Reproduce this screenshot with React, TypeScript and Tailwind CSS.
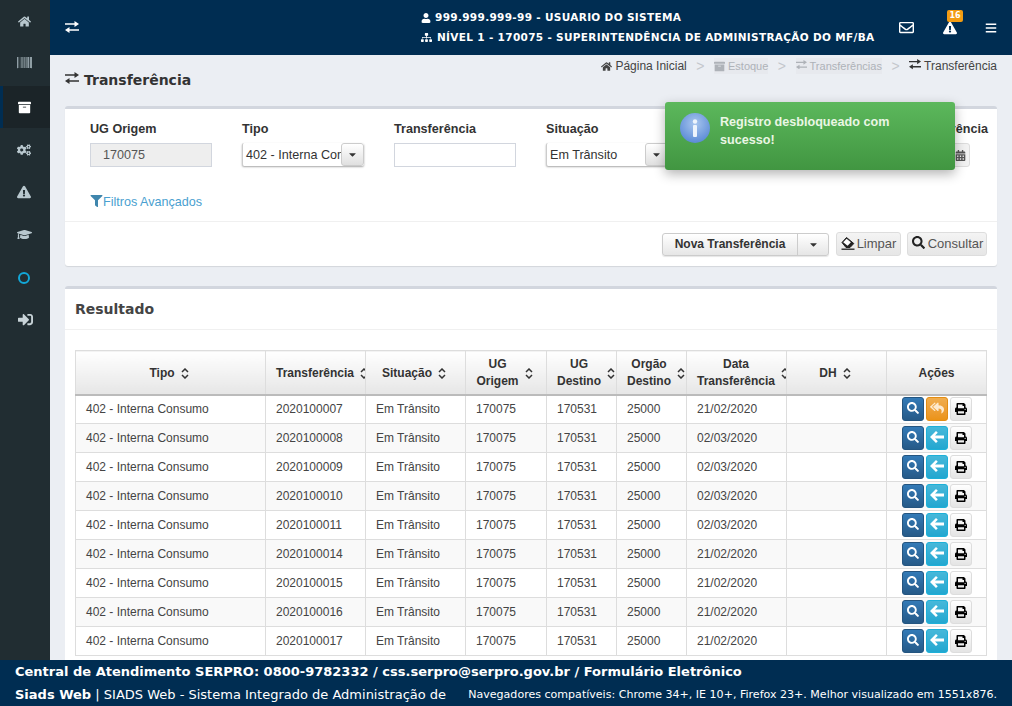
import React from "react";
import { FaHome, FaBarcode, FaArchive, FaCogs, FaExclamationTriangle, FaGraduationCap, FaSignInAlt, FaUser, FaSitemap, FaRegEnvelope, FaBars, FaFilter, FaSearch, FaPrint, FaReplyAll, FaCalendarAlt, FaCaretDown } from "react-icons/fa";

const rows: [string, string, boolean?][] = [
  ["2020100007", "21/02/2020", true],
  ["2020100008", "02/03/2020"],
  ["2020100009", "02/03/2020"],
  ["2020100010", "02/03/2020"],
  ["2020100011", "02/03/2020"],
  ["2020100014", "21/02/2020"],
  ["2020100015", "21/02/2020"],
  ["2020100016", "21/02/2020"],
  ["2020100017", "21/02/2020"],
];

function Exch({ className }: { className?: string }) {
  return (
    <svg viewBox="0 0 14 12" width="1em" height="0.86em" fill="currentColor" className={`shrink-0 ${className ?? ""}`}>
      <path d="M0 2.2h9.5V0L14 3 9.5 6V3.8H0zM14 8.2H4.5V6L0 9l4.5 3V9.8H14z" />
    </svg>
  );
}

function Eraser() {
  return (
    <svg viewBox="0 0 14 14" width="14" height="14" className="-mt-[3px] shrink-0" fill="none">
      <path d="M1 6.5 5.5 1.5 12.8 7.5 9 11.5H5z" fill="#222" stroke="#222" strokeWidth="1" strokeLinejoin="round" />
      <path d="M2.2 6.3 5.6 2.7 9.9 6.2 6.6 9.7z" fill="#fff" />
      <path d="M0.5 13.2h13" stroke="#222" strokeWidth="1.3" />
    </svg>
  );
}

function ArrowL() {
  return (
    <svg viewBox="0 0 14 12" width="14" height="12" fill="currentColor" className="-mt-[2px] shrink-0">
      <path d="M0 6 6 0l1.8 1.8L5 4.6h9v2.8H5l2.8 2.8L6 12z" />
    </svg>
  );
}

function Sort() {
  return (
    <svg width="8" height="11" viewBox="0 0 8 11" className="inline-block shrink-0" fill="none" stroke="#333" strokeWidth="1.5">
      <path d="M1 4 4 1l3 3M1 7l3 3 3-3" />
    </svg>
  );
}

function Th({ w, children, sort = true }: { w: string; children: React.ReactNode; sort?: boolean }) {
  return (
    <th className={`${w} h-[44px] overflow-hidden whitespace-nowrap border border-[#ddd] border-b-2 border-b-[#bbb] bg-gradient-to-b from-white to-[#e6e6e6] pb-0 pl-[10px] pt-[1px] text-center font-bold text-[#333] ${sort ? "pr-[13px]" : "pr-[10px]"}`}>
      <div className="inline-flex items-center gap-[6px] leading-[17px]">
        <span>{children}</span>
        {sort && <Sort />}
      </div>
    </th>
  );
}

function Td({ children }: { children?: React.ReactNode }) {
  return <td className="h-[29px] border border-[#ddd] p-0 pl-[10px] align-middle text-[#444]">{children}</td>;
}

function ActBtn({ cls, children }: { cls: string; children: React.ReactNode }) {
  return <span className={`flex h-[24px] w-[22px] items-center justify-center rounded-[3px] border ${cls}`}>{children}</span>;
}

function SelectBox({ text }: { text: string }) {
  return (
    <div className="mt-[1px] flex h-[23px] w-[122px] items-center overflow-hidden rounded-[2px] border-l border-l-[#ccc] bg-white shadow-[0_1px_2px_rgba(0,0,0,0.35)]">
      <span className="flex-1 overflow-hidden whitespace-nowrap pl-[3px] pt-[2px] text-[12.6px] text-[#333]">{text}</span>
      <span className="flex h-full w-[23px] shrink-0 items-center justify-center rounded-[3px] border border-[#ccc] bg-gradient-to-b from-white to-[#e0e0e0]">
        <FaCaretDown className="text-[11px] text-[#333]" />
      </span>
    </div>
  );
}

function Field({ label, labelCls = "", children }: { label: string; labelCls?: string; children: React.ReactNode }) {
  return (
    <div className="w-[152px] shrink-0">
      <div className={`mb-[5px] h-[17px] whitespace-nowrap text-[12.6px] font-bold leading-[17px] text-[#333] ${labelCls}`}>{label}</div>
      {children}
    </div>
  );
}

function Crumb({ icon, text, muted }: { icon: React.ReactNode; text: string; muted?: boolean }) {
  return (
    <span className={`flex items-center gap-[3px] ${muted ? "bg-[#e7e9ee] text-[11px] text-[#aeb2b8]" : "text-[#444]"}`}>
      {icon}
      {text}
    </span>
  );
}

const Sep = () => <span className="mx-[9.5px] text-[14px] leading-[14px] text-[#c4c7cc]">&gt;</span>;

const side = [
  { I: FaHome, cls: "h-[42px] text-[#b8c7ce]", ic: "text-[13px]" },
  { I: FaBarcode, cls: "h-[44px] pb-[3px] text-[#b8c7ce]", ic: "text-[15px]" },
  { I: FaArchive, cls: "h-[42px] border-l-[3px] border-l-[#002d52] bg-[#1b2428] text-white", ic: "-ml-[3px] text-[13px]" },
  { I: FaCogs, cls: "h-[43px] text-[#b8c7ce]", ic: "text-[14px]" },
  { I: FaExclamationTriangle, cls: "h-[42px] text-[#b8c7ce]", ic: "text-[14px]" },
  { I: FaGraduationCap, cls: "h-[42px] text-[#b8c7ce]", ic: "text-[15px]" },
];

export default function App() {
  return (
    <div className="flex h-[706px] w-[1012px] flex-col overflow-hidden font-['Liberation_Sans',sans-serif] text-[12px]">
      <div className="flex min-h-0 flex-1">
        <aside className="flex w-[50px] shrink-0 flex-col bg-[#212d32]">
          {side.map(({ I, cls, ic }, i) => (
            <div key={i} className={`flex items-center justify-center pr-[2px] ${cls}`}>
              <I className={ic} />
            </div>
          ))}
          <div className="flex h-[46px] items-center justify-center pr-[2px]">
            <span className="h-[12px] w-[12px] rounded-full border-2 border-[#12a7d8]" />
          </div>
          <div className="flex h-[37px] items-center justify-center text-[#c8d3d8]">
            <FaSignInAlt className="text-[15px]" />
          </div>
        </aside>
        <div className="relative flex min-w-0 flex-1 flex-col bg-[#ebeef3]">
          <header className="flex h-[55px] shrink-0 items-center bg-[#002d52] text-white">
            <Exch className="ml-[15px] text-[14px]" />
            <div className="ml-[342px] flex w-[453px] shrink-0 flex-col gap-[7px] font-['DejaVu_Sans',sans-serif] text-[10.5px] font-bold tracking-[0.33px]">
              <div className="flex h-[13px] items-center gap-[4px] whitespace-nowrap"><FaUser className="shrink-0 text-[10px]" />999.999.999-99 - USUARIO DO SISTEMA</div>
              <div className="flex h-[13px] items-center gap-[5px] whitespace-nowrap"><FaSitemap className="shrink-0 text-[11px]" />NÍVEL 1 - 170075 - SUPERINTENDÊNCIA DE ADMINISTRAÇÃO DO MF/BA</div>
            </div>
            <div className="ml-[25px] flex shrink-0 items-center">
              <FaRegEnvelope className="text-[15px]" />
              <span className="relative ml-[29px] flex">
                <FaExclamationTriangle className="text-[14px]" />
                <span className="absolute left-[4px] top-[-11px] flex h-[12px] w-[16px] items-center justify-center rounded-[2px] bg-[#f39c12] font-['DejaVu_Sans',sans-serif] text-[8px] font-bold">16</span>
              </span>
              <FaBars className="ml-[28px] text-[12px]" />
            </div>
          </header>

          <div className="flex h-[51px] shrink-0 justify-between pl-[15px] pr-[15px]">
            <h1 className="mt-[16px] flex h-[18px] items-center gap-[5px] font-['DejaVu_Sans',sans-serif] text-[14px] font-bold text-[#333]">
              <Exch className="-mt-[4px] text-[14px]" />Transferência
            </h1>
            <div className="mt-[4px] flex h-[14px] items-center text-[12px]">
              <Crumb icon={<FaHome className="text-[11px]" />} text="Página Inicial" />
              <Sep />
              <Crumb muted icon={<FaArchive className="text-[11px]" />} text="Estoque" />
              <Sep />
              <Crumb muted icon={<Exch className="-mt-[3px] text-[11px]" />} text="Transferências" />
              <Sep />
              <Crumb icon={<Exch className="-mt-[3px] text-[12px] text-[#333]" />} text="Transferência" />
            </div>
          </div>

          <section className="mx-[15px] h-[160px] shrink-0 rounded-[3px] border-t-[3px] border-t-[#d2d6de] bg-white shadow-[0_1px_1px_rgba(0,0,0,0.1)]">
            <div className="flex h-[113px] flex-col border-b border-b-[#f0f0f0] pl-[25px] pt-[12px]">
              <div className="flex">
                <Field label="UG Origem">
                  <div className="flex h-[24px] w-[122px] items-center border border-[#d2d6de] bg-[#eee] pl-[12px] text-[12.6px] text-[#555]">170075</div>
                </Field>
                <Field label="Tipo"><SelectBox text="402 - Interna Consumo" /></Field>
                <Field label="Transferência"><div className="h-[24px] w-[122px] border border-[#d2d6de] bg-white" /></Field>
                <Field label="Situação"><SelectBox text="Em Trânsito" /></Field>
                <Field label="Destino"><div className="h-[24px] w-[122px] border border-[#d2d6de] bg-white" /></Field>
                <Field label="Data de Transferência" labelCls="pl-[7px]">
                  <div className="mt-[1px] flex h-[24px] w-[120px]">
                    <div className="flex-1 border border-[#d2d6de]" />
                    <span className="flex w-[20px] items-center justify-center rounded-r-[3px] border border-[#ddd] bg-[#f2f2f2]"><FaCalendarAlt className="text-[11px] text-[#555]" /></span>
                  </div>
                </Field>
              </div>
              <div className="mt-[26px] flex items-center text-[12.6px] text-[#4a9fd0]">
                <FaFilter className="-mt-[3px] w-[13px] text-[12px] text-[#3f86ad]" />Filtros Avançados
              </div>
            </div>
            <div className="flex h-[44px] items-center justify-end gap-[6px] pr-[10px]">
              <div className="mr-[1px] flex h-[23px] items-center rounded-[3px] border border-[#ccc] bg-gradient-to-b from-white to-[#e6e6e6] text-[12px] font-bold text-[#333] shadow-[0_1px_1px_rgba(0,0,0,0.1)]">
                <span className="flex h-full w-[135px] items-center justify-center border-r border-r-[#ccc]">Nova Transferência</span>
                <span className="flex w-[30px] justify-center"><FaCaretDown className="text-[11px]" /></span>
              </div>
              <span className="flex h-[24px] w-[65px] items-center justify-center gap-[2px] rounded-[3px] border border-[#ddd] bg-gradient-to-b from-[#f4f4f4] to-[#e6e6e6] text-[13px] text-[#555]"><Eraser />Limpar</span>
              <span className="flex h-[24px] w-[80px] items-center justify-center gap-[3px] rounded-[3px] border border-[#ddd] bg-gradient-to-b from-[#f4f4f4] to-[#e6e6e6] pl-[1px] text-[13px] text-[#555]"><FaSearch className="-mt-[3px] text-[13px] text-[#222]" />Consultar</span>
            </div>
          </section>

          <section className="mx-[15px] mt-[20px] min-h-0 flex-1 rounded-t-[3px] border-t-[3px] border-t-[#d2d6de] bg-white">
            <div className="flex h-[41px] items-center border-b border-b-[#f0f0f0] pl-[10px] pt-[1px] font-['DejaVu_Sans',sans-serif] text-[14px] font-bold text-[#444]">Resultado</div>
            <div className="px-[10px] pt-[20px]">
              <table className="w-[911px] table-fixed border-collapse text-[12px]">
                <thead>
                  <tr>
                    <Th w="w-[190px]">Tipo</Th>
                    <Th w="w-[100px]">Transferência</Th>
                    <Th w="w-[100px]">Situação</Th>
                    <Th w="w-[81px]">UG<br />Origem</Th>
                    <Th w="w-[70px]">UG<br />Destino</Th>
                    <Th w="w-[70px]">Orgão<br />Destino</Th>
                    <Th w="w-[100px]">Data<br />Transferência</Th>
                    <Th w="w-[100px]">DH</Th>
                    <Th w="w-[100px]" sort={false}>Ações</Th>
                  </tr>
                </thead>
                <tbody>
                  {rows.map(([id, date, first], i) => (
                    <tr key={id} className={i % 2 ? "bg-[#f9f9f9]" : "bg-white"}>
                      <Td>402 - Interna Consumo</Td>
                      <Td>{id}</Td>
                      <Td>Em Trânsito</Td>
                      <Td>170075</Td>
                      <Td>170531</Td>
                      <Td>25000</Td>
                      <Td>{date}</Td>
                      <Td />
                      <td className="h-[29px] border border-[#ddd] p-0">
                        <div className="flex justify-center gap-[2px]">
                          <ActBtn cls="border-[#245580] bg-gradient-to-b from-[#337ab7] to-[#265a88] text-white"><FaSearch className="-mt-[3px] text-[12px]" /></ActBtn>
                          {first ? (
                            <ActBtn cls="border-[#e38d13] bg-gradient-to-b from-[#f0ad4e] to-[#eb9316] text-[#fdeacf]"><FaReplyAll className="-mt-[2px] text-[14px]" /></ActBtn>
                          ) : (
                            <ActBtn cls="border-[#1eb0d8] bg-gradient-to-b from-[#46b8da] to-[#22a7d0] text-white"><ArrowL /></ActBtn>
                          )}
                          <ActBtn cls="border-[#ddd] bg-gradient-to-b from-white to-[#e4e4e4] text-black"><FaPrint className="text-[12px]" /></ActBtn>
                        </div>
                      </td>
                    </tr>
                  ))}
                </tbody>
              </table>
            </div>
          </section>

          <div className="absolute left-[615px] top-[102px] flex h-[68px] w-[290px] rounded-[3px] bg-gradient-to-b from-[#5cb85c] to-[#419641] shadow-[0_4px_12px_rgba(0,0,0,0.3)]">
            <svg width="32" height="32" viewBox="0 0 32 32" className="ml-[14px] mt-[10px] shrink-0">
              <defs>
                <radialGradient id="ib" cx="50%" cy="35%" r="65%">
                  <stop offset="0%" stopColor="#a9c6ee" />
                  <stop offset="100%" stopColor="#5b8bd6" />
                </radialGradient>
              </defs>
              <circle cx="16" cy="16" r="15" fill="url(#ib)" />
              <circle cx="16" cy="9.5" r="2.2" fill="#eef4fc" />
              <rect x="14" y="13" width="4" height="12" rx="1" fill="#eef4fc" />
            </svg>
            <div className="ml-[9px] mt-[11px] w-[190px] text-[12.6px] font-bold leading-[18px] text-[#eaf6e4]">Registro desbloqueado com sucesso!</div>
          </div>
        </div>
      </div>
      <footer className="h-[46px] shrink-0 bg-[#002d52] pl-[15px] pr-[15px] font-['DejaVu_Sans',sans-serif] text-white">
        <div className="flex h-[23px] items-center whitespace-nowrap text-[13px] font-bold">Central de Atendimento SERPRO: 0800-9782332 / css.serpro@serpro.gov.br / Formulário Eletrônico</div>
        <div className="flex h-[23px] items-center justify-between whitespace-nowrap pt-[1px] text-[13px]">
          <span><b>Siads Web</b> | SIADS Web - Sistema Integrado de Administração de</span>
          <span className="text-[11.05px]">Navegadores compatíveis: Chrome 34+, IE 10+, Firefox 23+. Melhor visualizado em 1551x876.</span>
        </div>
      </footer>
    </div>
  );
}
